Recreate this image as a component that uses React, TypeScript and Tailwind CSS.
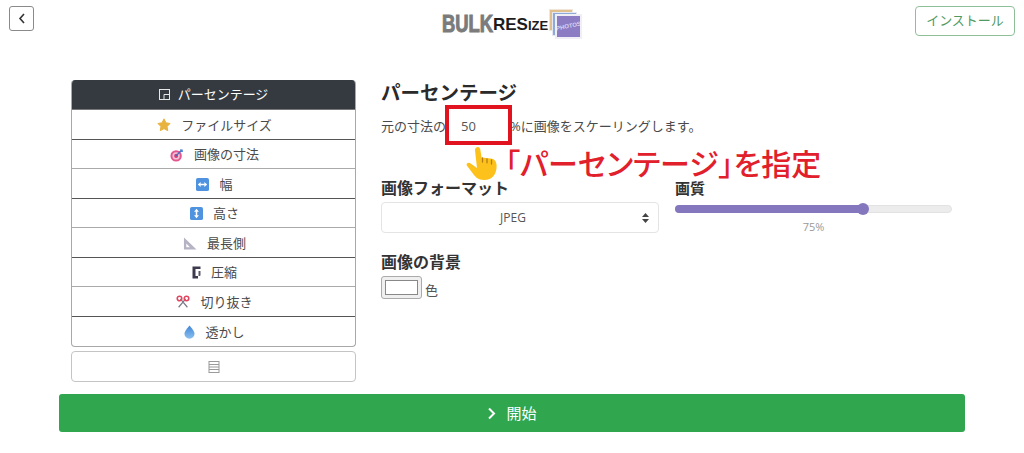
const FONT = "font-['Open_Sans','Noto_Sans_CJK_JP',sans-serif]";

function StarIcon() {
  return (
    <svg width="14" height="14" viewBox="0 0 16 16">
      <path d="M8 1.2l2.100 4.300 4.700.7-3.400 3.300.8 4.700L8 12l-4.200 2.200.8-4.700L1.200 6.200l4.700-.7z" fill="#e8b33f" stroke="#e8b33f" strokeWidth="1.200" strokeLinejoin="round" />
    </svg>
  );
}

function TargetIcon() {
  return (
    <svg width="14" height="14" viewBox="0 0 16 16">
      <circle cx="7" cy="9" r="6.500" fill="#e4568f" />
      <circle cx="7" cy="9" r="4.200" fill="#f3c3d6" />
      <circle cx="7" cy="9" r="2.300" fill="#d63f7c" />
      <path d="M7 9l6-6.500" stroke="#3f6fc0" strokeWidth="1.500" />
      <path d="M11.500 1.500l3 .2.300 2.800-2.200.2z" fill="#4d86d8" />
    </svg>
  );
}

function ArrowBox({ vertical }: { vertical?: boolean }) {
  return (
    <svg width="13" height="13" viewBox="0 0 14 14">
      <rect width="14" height="14" rx="2" fill="#4f93e0" />
      <g transform={vertical ? "rotate(90 7 7)" : undefined} fill="#fff">
        <path d="M2 7l3-2.600v5.200zM12 7L9 4.400v5.200z" />
        <rect x="4.500" y="6.200" width="5" height="1.600" />
      </g>
    </svg>
  );
}

function RulerIcon() {
  return (
    <svg width="14" height="13" viewBox="0 0 15 14">
      <path fillRule="evenodd" d="M1 0.500L14.500 13.500H1zM3.500 7v4h4z" fill="#b5b3c4" />
    </svg>
  );
}

function ClampIcon() {
  return (
    <svg width="9" height="13" viewBox="0 0 9 13">
      <path d="M0.500 0.500H8.500V3H3.500V10H6V12.500H0.500z" fill="#3d3a4d" />
      <path d="M6.500 5h2V9.500L7.500 10H6.500z" fill="#5a5768" />
    </svg>
  );
}

function ScissorsIcon() {
  return (
    <svg width="14" height="14" viewBox="0 0 16 16" fill="none">
      <path d="M3 14L11 4.500M13 14L5 4.500" stroke="#7a7a8c" strokeWidth="1.400" />
      <circle cx="4" cy="4" r="2.600" stroke="#e0465f" strokeWidth="1.800" />
      <circle cx="12" cy="4" r="2.600" stroke="#e0465f" strokeWidth="1.800" />
    </svg>
  );
}

function DropIcon() {
  return (
    <svg width="11" height="14" viewBox="0 0 12 15">
      <defs>
        <linearGradient id="drop" x1="0" y1="0" x2="0" y2="1">
          <stop offset="0" stopColor="#3f86d6" />
          <stop offset="1" stopColor="#8bc0f0" />
        </linearGradient>
      </defs>
      <path d="M6 .5C6 .5 11.500 6.500 11.500 9.500a5.500 5.300 0 0 1-11 0C.5 6.500 6 .5 6 .5z" fill="url(#drop)" />
    </svg>
  );
}

function HandIcon() {
  return (
    <svg width="38" height="38" viewBox="0 0 38 38">
      <path d="M12.500 2.500c1.800-1 3.500 0 3.800 2l1.300 8 9 1c4.500.6 6 3.500 6 7.500 0 8-4 14-12.500 14-6 0-9-3-12-7.500L2.800 20.500c-1-1.800 1.700-3.700 3.500-2.200l6.700 4.700-2-17.500c-.1-1.300.4-2.300 1.500-3z" fill="#fcc21b" />
      <path d="M18.500 13v4M23 13.800v4M27.500 15v4" stroke="#b57d14" strokeWidth="1.300" strokeLinecap="round" />
    </svg>
  );
}

function Logo() {
  return (
    <div className="flex items-center h-[32px]">
      <span className="w-[50px] inline-block origin-left scale-x-[0.8] font-['Liberation_Sans'] font-bold text-[23px] leading-none text-[#7b7b7b] [-webkit-text-stroke:1px_#7b7b7b]">BULK</span>
      <span className="w-[54px] ml-[1px] whitespace-nowrap font-['Liberation_Sans'] font-bold text-[17px] leading-none text-[#1c1c1c]">
        RES<span className="text-[13px]">IZE</span>
      </span>
      <div className="relative ml-[2px] w-[34px] h-[32px]">
        <div className="absolute left-0 top-[1px] w-[24px] h-[22px] bg-[#e0c08f] border border-[#efe6d6]" />
        <div className="absolute left-[3px] top-[4px] w-[25px] h-[24px] bg-[#8fa9d8] border border-[#e4e8f2]" />
        <div className="absolute left-[6px] top-[6px] w-[27px] h-[25px] bg-[#8c7cc4] border-2 border-[#f1eff6] flex items-center justify-center overflow-hidden">
          <span className="font-['Liberation_Sans'] font-bold text-[6px] text-[#d8d2ee] -rotate-12">PHOTOS</span>
        </div>
      </div>
    </div>
  );
}

const ITEMS = [
  { label: "ファイルサイズ", icon: <StarIcon />, dark: false },
  { label: "画像の寸法", icon: <TargetIcon />, dark: true },
  { label: "幅", icon: <ArrowBox />, dark: false },
  { label: "高さ", icon: <ArrowBox vertical />, dark: true },
  { label: "最長側", icon: <RulerIcon />, dark: false },
  { label: "圧縮", icon: <ClampIcon />, dark: true },
  { label: "切り抜き", icon: <ScissorsIcon />, dark: false },
  { label: "透かし", icon: <DropIcon />, dark: true },
];

function Sidebar() {
  return (
    <div className="w-[285px] shrink-0">
      <div className="rounded-[4px] overflow-hidden border border-[#a8a8a8] border-t-0">
        <div className="h-[30px] -mx-px bg-[#343a40] text-white flex items-center justify-center gap-[8px] text-[13px] border-b border-[#777]">
          <svg width="11" height="11" viewBox="0 0 11 11" fill="none" stroke="#e8e8e8" strokeWidth="1">
            <rect x="0.500" y="0.500" width="10" height="10" />
            <path d="M5 10.500V5.500h5.500" />
          </svg>
          <span>パーセンテージ</span>
        </div>
        {ITEMS.map((item, i) => (
          <div
            key={item.label}
            className={`h-[29.500px] pt-[2px] pl-[2px] flex items-center justify-center gap-[10px] text-[13px] text-[#4a4a4a] ${
              i < ITEMS.length - 1 ? (item.dark ? "border-b border-[#aaa]" : "border-b border-[#555]") : ""
            }`}
          >
            {item.icon}
            <span>{item.label}</span>
          </div>
        ))}
      </div>
      <div className="mt-[4px] h-[31px] rounded-[4px] border border-[#c4c4c4] flex items-center justify-center">
        <svg width="12" height="12" viewBox="0 0 12 12" fill="none" stroke="#9a9a9a" strokeWidth="1">
          <rect x="1" y="0.500" width="10" height="11" />
          <path d="M1 3.500h10M1 6h10M1 8.500h10" />
        </svg>
      </div>
    </div>
  );
}

function Main() {
  return (
    <div className="relative ml-[25px] w-[572px]">
      <h2 className="mt-[1px] text-[19.500px] leading-[24px] font-bold text-[#2a2a2a]">パーセンテージ</h2>
      <div className="mt-[7px] h-[30px] flex items-center text-[13px] text-[#4a4a4a]">
        <span>元の寸法の</span>
        <span className="ml-[15px] w-[49px] text-[#555]">50</span>
        <span>%に画像をスケーリングします。</span>
      </div>
      <div className="mt-[35px] flex">
        <div className="w-[278px]">
          <div className="text-[16px] leading-[22px] font-bold text-[#333]">画像フォーマット</div>
          <div className="mt-[3px] h-[31px] pr-[14px] rounded-[4px] border border-[#e4e4e4] relative flex items-center justify-center text-[12px] text-[#555]">
            JPEG
            <svg className="absolute right-[9px] top-[10px]" width="7" height="10" viewBox="0 0 7 10" fill="#444">
              <path d="M3.500 0L7 4H0zM3.500 10L0 6h7z" />
            </svg>
          </div>
        </div>
        <div className="ml-[16px] w-[277px]">
          <div className="text-[15px] leading-[22px] font-bold text-[#333]">画質</div>
          <div className="relative mt-[-4px] translate-y-[10px] h-[8px] rounded-full bg-[#ececec] border border-[#e2e2e2]">
            <div className="absolute left-[-1px] top-[-1px] h-[8px] w-[188px] rounded-full bg-[#8577bd]" />
            <div className="absolute left-[181px] top-[-3px] w-[12px] h-[12px] rounded-full bg-[#8577bd]" />
          </div>
          <div className="mt-[17px] text-center text-[11px] leading-[14px] text-[#999]">75%</div>
        </div>
      </div>
      <div className="mt-[17px] text-[16px] leading-[22px] font-bold text-[#333]">画像の背景</div>
      <div className="mt-[3px] flex items-start gap-[3px]">
        <div className="w-[41px] h-[23px] rounded-[3px] border border-[#aaa] bg-[#efefef] p-[3px]">
          <div className="w-full h-full bg-white border border-[#888]" />
        </div>
        <span className="mt-[4px] text-[13px] leading-[20px] text-[#555]">色</span>
      </div>

      {/* annotation laid over the form */}
      <div className="absolute left-[64px] top-[25px] w-[67px] h-[40px] border-[4px] border-[#e1131f]" />
      <div className="absolute left-[83px] top-[65px]">
        <HandIcon />
      </div>
      <div className="absolute left-[124px] top-[62px] whitespace-nowrap text-[30px] leading-[44px] font-medium text-[#e1202c] [font-feature-settings:'palt']">
        「パーセンテージ」を指定
      </div>
    </div>
  );
}

export default function App() {
  return (
    <div className={`w-[1024px] h-[453px] bg-white overflow-hidden ${FONT}`}>
      <header className="h-[80px] flex items-start pl-[9px] pr-[9px] pt-[6px]">
        <div className="w-[433px] shrink-0">
          <button className="w-[25px] h-[25px] rounded-[3px] border border-[#8a8a8a] flex items-center justify-center">
            <svg width="8" height="11" viewBox="0 0 8 11" fill="none" stroke="#333" strokeWidth="1.600">
              <path d="M6 1L2 5.500 6 10" />
            </svg>
          </button>
        </div>
        <div className="mt-[2px]">
          <Logo />
        </div>
        <button className="ml-auto w-[100px] h-[30px] rounded-[4px] border border-[#8fbf98] text-[13px] text-[#4f9a62]">
          インストール
        </button>
      </header>
      <div className="flex pl-[71px]">
        <Sidebar />
        <Main />
      </div>
      <button className="ml-[59px] mt-[12px] w-[906px] h-[38px] rounded-[3px] bg-[#30a64f] text-white flex items-center justify-center gap-[10px] text-[15px]">
        <svg width="9" height="13" viewBox="0 0 9 13" fill="none" stroke="#fff" strokeWidth="2">
          <path d="M2 1.500L7 6.500 2 11.500" />
        </svg>
        <span>開始</span>
      </button>
    </div>
  );
}
